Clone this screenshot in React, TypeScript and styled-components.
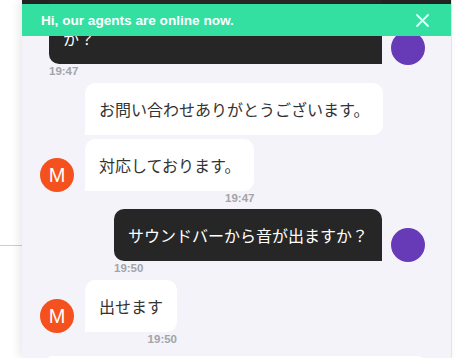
import * as React from 'react';
import styled, { createGlobalStyle } from 'styled-components';

const GlobalStyle = createGlobalStyle`
  html, body {
    margin: 0;
    padding: 0;
    background: #ffffff;
    height: 358px;
    overflow: hidden;
  }
  * { box-sizing: border-box; }
`;

const Screen = styled.div`
  display: flex;
  width: 456px;
  height: 358px;
  background: #ffffff;
`;

const Backdrop = styled.div`
  width: 22px;
  flex: none;
  padding-top: 245px;
`;

const Divider = styled.div`
  height: 1px;
  background: #cdcdcd;
`;

const Panel = styled.div`
  position: relative;
  width: 430px;
  flex: none;
  height: 358px;
  overflow: hidden;
  background: #f3f3f9;
  border-right: 1px solid #e4e4ea;
  box-shadow: -3px 0 9px rgba(0, 0, 0, 0.09);
  font-family: 'Noto Sans CJK JP', 'Liberation Sans', sans-serif;
`;

const TopStrip = styled.div`
  height: 4px;
  background: #232323;
`;

const Banner = styled.div`
  position: absolute;
  top: 4px;
  left: 0;
  right: 0;
  height: 32px;
  display: flex;
  align-items: center;
  justify-content: space-between;
  padding: 0 22px 0 19px;
  background: #33e0a2;
  color: #ffffff;
  font-family: 'Liberation Sans', Arial, sans-serif;
  font-weight: 700;
  font-size: 13.6px;
  z-index: 2;
`;

const CloseButton = styled.button`
  border: 0;
  background: none;
  padding: 0;
  display: flex;
  width: 14px;
  height: 14px;
  align-items: center;
  justify-content: center;
  cursor: pointer;
`;

const Thread = styled.div`
  display: flex;
  flex-direction: column;
  gap: 4px;
  padding: 0 26px 0 18px;
  margin-top: -14px;
`;

const Row = styled.div<{ $mine?: boolean }>`
  display: flex;
  align-items: flex-end;
  justify-content: ${(p) => (p.$mine ? 'flex-end' : 'flex-start')};
  gap: ${(p) => (p.$mine ? '9px' : '11px')};
`;

const Avatar = styled.div<{ $color: string; $lift: number }>`
  width: 34px;
  height: 34px;
  flex: none;
  border-radius: 50%;
  background: ${(p) => p.$color};
  color: #ffffff;
  display: flex;
  align-items: center;
  justify-content: center;
  font-family: 'Liberation Sans', Arial, sans-serif;
  font-size: 20px;
  margin-bottom: ${(p) => p.$lift}px;
`;

const Group = styled.div`
  display: flex;
  flex-direction: column;
  align-items: flex-start;
  gap: 4px;
`;

const Item = styled.div<{ $mine?: boolean }>`
  display: flex;
  flex-direction: column;
  align-items: ${(p) => (p.$mine ? 'flex-start' : 'flex-end')};
`;

const Bubble = styled.div<{ $mine?: boolean; $lines?: number }>`
  padding: 15px 14px;
  font-size: 16px;
  line-height: 22px;
  height: ${(p) => 30 + 22 * (p.$lines ?? 1)}px;
  overflow: hidden;
  color: ${(p) => (p.$mine ? '#ffffff' : '#333333')};
  background: ${(p) => (p.$mine ? '#262626' : '#ffffff')};
  border-radius: ${(p) => (p.$mine ? '10px 10px 0 10px' : '10px 10px 10px 0')};
  white-space: nowrap;
`;

const Time = styled.div<{ $tall?: boolean }>`
  font-family: 'Liberation Sans', Arial, sans-serif;
  font-size: 11.5px;
  font-weight: 600;
  height: ${(p) => (p.$tall ? 15 : 14)}px;
  line-height: 15px;
  color: #a3a3a8;
`;

const Composer = styled.div`
  margin: 10px 24px 0 21px;
  height: 40px;
  background: #ffffff;
  border-radius: 10px;
`;

const Close = () => (
  <svg width="13" height="13" viewBox="0 0 13 13">
    <path d="M1 1 L12 12 M12 1 L1 12" stroke="#eafff7" strokeWidth="1.8" strokeLinecap="round" />
  </svg>
);

type Msg = { text: React.ReactNode; time?: string; lines?: number };

const AgentBlock = ({ msgs }: { msgs: Msg[] }) => (
  <Row>
    <Avatar $color="#f4511e" $lift={13}>
      M
    </Avatar>
    <Group>
      {msgs.map((m, i) => (
        <Item key={i}>
          <Bubble>{m.text}</Bubble>
          {m.time && <Time>{m.time}</Time>}
        </Item>
      ))}
    </Group>
  </Row>
);

const UserBlock = ({ msg, width }: { msg: Msg; width?: number }) => (
  <Row $mine>
    <Item $mine>
      <Bubble $mine $lines={msg.lines} style={width ? { width } : undefined}>
        {msg.text}
      </Bubble>
      <Time $tall>{msg.time}</Time>
    </Item>
    <Avatar $color="#673ab7" $lift={14} />
  </Row>
);

export default function App() {
  return (
    <>
      <GlobalStyle />
      <Screen>
        <Backdrop>
          <Divider />
        </Backdrop>
        <Panel>
          <TopStrip />
          <Banner>
            <span>Hi, our agents are online now.</span>
            <CloseButton aria-label="close">
              <Close />
            </CloseButton>
          </Banner>
          <Thread>
            <UserBlock
              width={333}
              msg={{
                text: (
                  <>
                    テレビとサウンドバーは接続できます
                    <br />
                    か？
                  </>
                ),
                time: '19:47',
                lines: 2,
              }}
            />
            <AgentBlock
              msgs={[
                { text: 'お問い合わせありがとうございます。' },
                { text: '対応しております。', time: '19:47' },
              ]}
            />
            <UserBlock msg={{ text: 'サウンドバーから音が出ますか？', time: '19:50' }} />
            <AgentBlock msgs={[{ text: '出せます', time: '19:50' }]} />
          </Thread>
          <Composer />
        </Panel>
      </Screen>
    </>
  );
}
